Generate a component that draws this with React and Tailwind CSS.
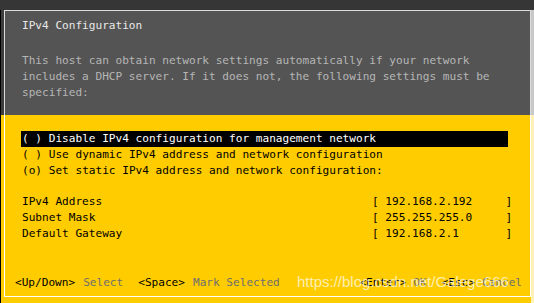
import React from 'react';

const options = [
  { mark: '( )', label: 'Disable IPv4 configuration for management network', active: true },
  { mark: '( )', label: 'Use dynamic IPv4 address and network configuration' },
  { mark: '(o)', label: 'Set static IPv4 address and network configuration:' },
];

const fields = [
  { label: 'IPv4 Address', value: '192.168.2.192' },
  { label: 'Subnet Mask', value: '255.255.255.0' },
  { label: 'Default Gateway', value: '192.168.2.1' },
];

const mono = { fontFamily: '"DejaVu Sans Mono", "Liberation Mono", monospace' };

const App = () => {
  return (
    <div
      className="relative w-[534px] h-[303px] overflow-hidden bg-[#363636] flex flex-col text-[11.1px] leading-[16px] whitespace-pre"
      style={mono}
    >
      <div className="h-[10px] shrink-0" />

      {/* header panel */}
      <div className="flex h-[105px] shrink-0">
        <div className="w-[4px] bg-[#3d3d3d] border-l border-black" />
        <div className="flex-1 bg-[#545454] border-t border-l border-r border-[#dcdcdc] pl-[17px] pt-[7px]">
          <div className="text-[#e8e8e8]">IPv4 Configuration</div>
          <div className="mt-[19px] text-[#b6b6b6]">
            <div>This host can obtain network settings automatically if your network</div>
            <div>includes a DHCP server. If it does not, the following settings must be</div>
            <div>specified:</div>
          </div>
        </div>
        <div className="w-[3px] bg-[#c8c8c8]" />
      </div>

      {/* body panel */}
      <div className="flex flex-1 bg-[#ffcc00]">
        <div className="w-[4px] border-l border-black" />
        <div className="flex-1 mb-[6px] border-l border-r border-b border-white flex flex-col pt-[16px]">
          <div className="pl-[16px] pr-[22px]">
            {options.map((o) => (
              <div
                key={o.label}
                className={o.active ? 'bg-black text-white pl-[1px]' : 'text-black pl-[1px]'}
              >
                {o.mark} {o.label}
              </div>
            ))}
          </div>

          <div className="mt-[15px] pl-[17px] text-black">
            {fields.map((f) => (
              <div key={f.label} className="flex">
                <span className="w-[350px]">{f.label}</span>
                <span>{'[ ' + f.value.padEnd(18, ' ') + ']'}</span>
              </div>
            ))}
          </div>

          <div className="mt-auto mb-[5px] flex justify-between pl-[10px] pr-[8px]">
            <div className="flex">
              <span className="text-black">&lt;Up/Down&gt;</span>
              <span className="ml-[8px] text-[#6e6e6e]">Select</span>
              <span className="ml-[15px] text-black">&lt;Space&gt;</span>
              <span className="ml-[8px] text-[#6e6e6e]">Mark Selected</span>
            </div>
            <div className="flex">
              <span className="text-black">&lt;Enter&gt;</span>
              <span className="ml-[7px] text-[#6e6e6e]">OK</span>
              <span className="ml-[15px] text-black">&lt;Esc&gt;</span>
              <span className="ml-[7px] text-[#6e6e6e]">Cancel</span>
            </div>
          </div>
        </div>
        <div className="w-[3px] bg-[#fff1b8]" />
      </div>

      {/* watermark */}
      <div
        className="absolute left-[297px] top-[272px] text-[15px] leading-[20px] text-white/70"
        style={{ fontFamily: '"Liberation Sans", Arial, sans-serif' }}
      >
        https://blog.csdn.net/Galege666
      </div>
    </div>
  );
};

export default App;
